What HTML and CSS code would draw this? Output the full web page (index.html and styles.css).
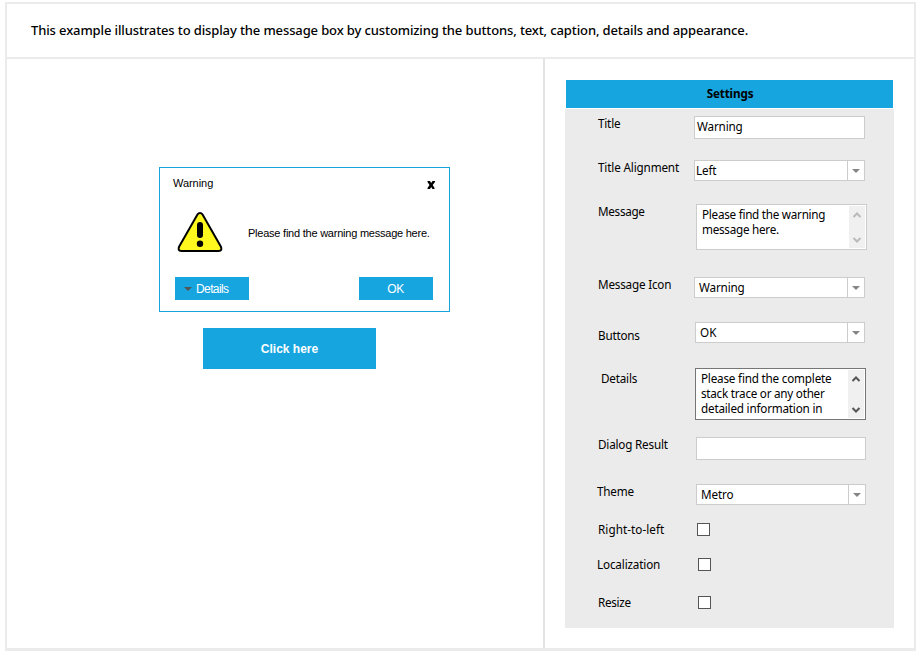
FILE: index.html
```html
<!DOCTYPE html>
<html lang="en">
<head>
<meta charset="utf-8">
<title>Message box</title>
<link rel="stylesheet" href="styles.css">
</head>
<body>
<div class="frame">
  <header class="intro">This example illustrates to display the message box by customizing the buttons, text, caption, details and appearance.</header>
  <div class="body">
    <main class="demo">
      <section class="dialog">
        <div class="caption"><span>Warning</span>
          <svg class="close" width="8" height="8" viewBox="0 0 8 8"><path d="M.5 0h2.500l1.200 2 1.300-2h2.500v1L5.700 4 7.500 7v1H5.500L4.200 6 3 8H.5V7l2-3-2-3z"/></svg>
        </div>
        <div class="content">
          <svg class="warn" width="46" height="42" viewBox="0 0 46 42"><path d="M20.300 2.700Q23-.7 25.700 2.700L43.800 34.500Q45.800 38.800 41.600 39H4.400Q.2 38.800 2.200 34.500Z" fill="#fff81f" stroke="#000" stroke-width="2"/><path d="M23 13v10" stroke="#000" stroke-width="6" stroke-linecap="round"/><circle cx="23" cy="31.800" r="3.200"/></svg>
          <span class="msg">Please find the warning message here.</span>
        </div>
        <div class="actions">
          <button class="btn details"><i class="caret"></i><span>Details</span></button>
          <button class="btn"><span>OK</span></button>
        </div>
      </section>
      <button class="launch">Click here</button>
    </main>
    <aside class="side">
      <h2>Settings</h2>
      <div class="panel">
        <div class="row r-title"><label>Title</label><div class="field">Warning</div></div>
        <div class="row r-align"><label>Title Alignment</label><div class="select"><span>Left</span><b></b></div></div>
        <div class="row r-message"><label>Message</label><div class="area"><p>Please find the warning<br>message here.</p><div class="scroll"><svg width="10" height="8" viewBox="0 0 10 8"><path d="M1.500 6 5 2.500 8.500 6"/></svg><svg width="10" height="8" viewBox="0 0 10 8"><path d="M1.500 2 5 5.500 8.500 2"/></svg></div></div></div>
        <div class="row r-icon"><label>Message Icon</label><div class="select"><span>Warning</span><b></b></div></div>
        <div class="row r-buttons"><label>Buttons</label><div class="select"><span>OK</span><b></b></div></div>
        <div class="row r-details"><label>Details</label><div class="area active"><p>Please find the complete<br><span class="tight">stack trace or any other</span><br>detailed information in</p><div class="scroll"><svg width="10" height="8" viewBox="0 0 10 8"><path d="M1.500 6 5 2.500 8.500 6"/></svg><svg width="10" height="8" viewBox="0 0 10 8"><path d="M1.500 2 5 5.500 8.500 2"/></svg></div></div></div>
        <div class="row r-result"><label>Dialog Result</label><div class="field"></div></div>
        <div class="row r-theme"><label>Theme</label><div class="select"><span>Metro</span><b></b></div></div>
        <div class="row r-rtl"><label>Right-to-left</label><div class="check"></div></div>
        <div class="row r-local"><label>Localization</label><div class="check"></div></div>
        <div class="row r-resize"><label>Resize</label><div class="check"></div></div>
      </div>
    </aside>
  </div>
</div>
</body>
</html>
```
FILE: styles.css
```css
* { box-sizing: border-box; }
body { margin: 0; padding: 2px 0 0 5px; background: #fff; color: #000; font: 11.7px/16px "Noto Sans", sans-serif; overflow: hidden; }
.frame { width: 911px; height: 649px; border: 2px solid #ebebeb; border-bottom-width: 3px; }
.intro { height: 55px; padding: 17px 0 0 24px; border-bottom: 2px solid #ebebeb; font-size: 13px; line-height: 18px; font-weight: 500; letter-spacing: -.122px; white-space: nowrap; }
.body { display: flex; height: 589px; }
.demo { width: 538px; border-right: 2px solid #e3e3e3; padding: 108px 0 0 152px; }
.dialog { width: 291px; height: 145px; border: 1px solid #17a5df; font: 11px/14px "Liberation Sans", sans-serif; }
.caption { display: flex; justify-content: space-between; padding: 8px 14px 0 13px; height: 44px; letter-spacing: -.05px; }
.close { margin-top: 5px; }
.content { display: flex; height: 65px; padding-left: 17px; }
.msg { margin: 14px 0 0 25px; letter-spacing: -.23px; white-space: nowrap; }
.actions { display: flex; justify-content: space-between; padding: 0 16px 0 15px; }
.btn { display: flex; align-items: center; justify-content: center; width: 74px; height: 23px; padding: 0 1px 0 0; border: 0; background: #17a5df; color: #fff; font: 12px/14px "Liberation Sans", sans-serif; letter-spacing: -.4px; }
.details { justify-content: flex-start; padding-left: 9px; letter-spacing: -.6px; }
.caret { border: 4px solid transparent; border-top-color: #555; border-bottom: 0; margin-right: 4px; }
.launch { display: block; width: 173px; height: 41px; margin: 16px 0 0 44px; padding: 0; border: 0; background: #17a5df; color: #fff; font: bold 12px/16px "Liberation Sans", sans-serif; }
.side { width: 329px; margin: 21px 0 0 20px; }
h2 { margin: 0 1px; height: 28px; padding-left: 1px; background: #17a5df; font-size: 11.700px; line-height: 26px; font-weight: 700; text-align: center; letter-spacing: -.15px; }
.panel { margin-top: 1px; height: 519px; padding-top: 7px; background: #ebebeb; letter-spacing: -.2px; white-space: nowrap; }
.row { display: flex; align-items: flex-start; padding-left: 33px; }
label { width: 96px; flex: none; line-height: 14px; }
.field, .select { width: 171px; background: #fff; border: 1px solid #ccc; padding-left: 2px; letter-spacing: -.15px; }
.field { height: 23px; line-height: 19px; }
.select { height: 21px; line-height: 19px; display: flex; justify-content: space-between; }
.select b { width: 17px; border-left: 1px solid #ccc; display: flex; align-items: center; justify-content: center; padding-right: 1px; }
.select b::after { content: ""; border: 4px solid transparent; border-top-color: #858585; border-bottom: 0; }
.area { width: 171px; height: 46px; background: #fff; border: 1px solid #ccc; display: flex; justify-content: space-between; padding: 1px; }
.area p { margin: 1px 0 0 4px; line-height: 15px; }
.tight { letter-spacing: -.25px; }
.scroll { width: 16px; background: #f0f0f0; display: flex; flex-direction: column; align-items: center; justify-content: space-between; padding: 5px 1px 4px 0; }
.scroll path { fill: none; stroke: #bababa; stroke-width: 2; }
.active { height: 52px; border-color: #767676; }
.active .scroll path { stroke: #555; }
.check { width: 13px; height: 13px; background: #fff; border: 1px solid #555; }
.r-title, .r-align { height: 44px; }
.r-align label { letter-spacing: -.15px; }
.r-align .select { padding-left: 1px; }
.r-message { height: 73px; }
.r-message label { letter-spacing: -.3px; }
.r-message .area { margin-left: 2px; letter-spacing: -.26px; }
.r-icon { height: 45px; }
.r-icon .select, .r-buttons .select, .r-theme .select { padding-left: 4px; }
.r-buttons { height: 46px; }
.r-buttons .select { width: 170px; margin-left: 1px; letter-spacing: 0; }
.r-buttons label { padding-top: 6px; }
.r-details { height: 69px; }
.r-details label { padding: 3px 0 0 3px; }
.r-details .area { margin-left: 1px; }
.r-result { height: 47px; }
.r-result .field, .r-theme .select { width: 170px; margin-left: 2px; }
.r-theme { height: 39px; }
.r-rtl { height: 35px; }
.r-local { height: 38px; }
.r-rtl label, .r-local label, .r-resize label { margin-top: -1px; }
.r-rtl label { letter-spacing: .06px; }
.r-local label { letter-spacing: -.15px; }
.r-resize label { letter-spacing: -.3px; }
.r-rtl .check { margin-left: 3px; }
.r-local .check, .r-resize .check { margin-left: 4px; }
.r-theme label, .r-local label { text-indent: -1px; }
```
